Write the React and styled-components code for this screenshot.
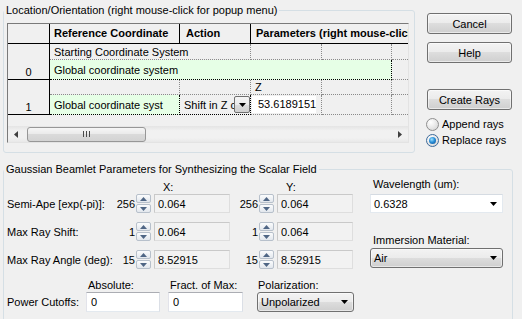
import React from 'react';
import styled, { createGlobalStyle, css } from 'styled-components';

const GlobalStyle = createGlobalStyle`
  * { box-sizing: border-box; }
  html, body { margin: 0; background: #f0f0f0; }
  body {
    font-family: "Liberation Sans", Arial, sans-serif;
    font-size: 11px;
    color: #000;
  }
`;

const Dialog = styled.div`
  width: 522px;
  height: 319px;
  overflow: hidden;
  padding: 4px 0 0 3px;
`;

const TopRow = styled.div`
  display: flex;
  align-items: flex-start;
`;

const GroupBox = styled.fieldset`
  margin: ${p => p.$mt || 0}px 0 0 0;
  width: ${p => p.$width}px;
  height: ${p => (p.$height ? `${p.$height}px` : 'auto')};
  min-width: 0;
  padding: ${p => p.$pad};
  border: 1px solid #d5dfe5;
  border-radius: 3px;
`;

const Legend = styled.legend`
  margin-left: -3px;
  padding: 0 2px;
  line-height: 13px;
`;

/* ---------- location grid ---------- */

const Table = styled.div`
  display: grid;
  grid-template-columns: 42px 130px 71px 71px 70px 1fr;
  grid-template-rows: 20px 16px 20px 15px 20px 1fr 16px;
  height: 120px;
  border: 1px solid;
  border-color: #7a7a7a #e3e3e3 #e3e3e3 #7a7a7a;
  background: #f0f0f0;
  overflow: hidden;
`;

const HeadCell = styled.div`
  grid-column: ${p => p.$col || 'auto'};
  padding: 2px 2px 0 ${p => p.$pl || 4}px;
  line-height: 14px;
  font-weight: bold;
  overflow: hidden;
  white-space: ${p => (p.$nowrap ? 'nowrap' : 'normal')};
  border-right: ${p => (p.$end ? 'none' : '1px solid #000')};
  border-bottom: 1px solid #000;
`;

const RowHead = styled.div`
  grid-column: 1;
  grid-row: ${p => p.$row} / span 2;
  display: flex;
  align-items: flex-end;
  justify-content: center;
  padding-bottom: 1px;
  border-right: 1px solid #000;
  border-bottom: 1px solid #000;
`;

const Cell = styled.div`
  grid-column: span ${p => p.$span || 1};
  display: flex;
  align-items: center;
  padding-left: 4px;
  white-space: nowrap;
  overflow: hidden;
  background: ${p => p.$bg || 'transparent'};
  border-right: 1px dotted ${p => (p.$focus ? '#000' : '#8a8a8a')};
  border-bottom: 1px dotted ${p => (p.$focus ? '#000' : '#8a8a8a')};
  ${p => p.$end && css`border-right: none;`}
`;

const ComboCell = styled(Cell)`
  padding-right: 0;
`;

const ComboText = styled.span`
  flex: 1;
  overflow: hidden;
`;

const CellDrop = styled.span`
  flex: none;
  width: 16px;
  height: 17px;
  display: flex;
  align-items: center;
  justify-content: center;
  border: 1px solid #707070;
  border-radius: 2px;
  background: linear-gradient(#f4f4f4, #ebebeb 50%, #dddddd 50%, #cfcfcf);
`;

const EditCell = styled(Cell)`
  padding: 1px 5px 1px 1px;
  align-items: stretch;
`;

const CellEdit = styled.span`
  flex: 1;
  display: flex;
  align-items: center;
  padding: 0 0 2px 6px;
  background: #fff;
`;

const Filler = styled.div`
  grid-column: 1 / -1;
`;

const HScroll = styled.div`
  grid-column: 1 / -1;
  display: flex;
  align-items: center;
  background: linear-gradient(#e4e4e4, #f1f1f1 30%, #f1f1f1 75%, #e8e8e8);
`;

const ScrollArrow = styled.div`
  flex: none;
  width: 16px;
  height: 100%;
  display: flex;
  align-items: center;
  justify-content: center;
`;

const Thumb = styled.div`
  flex: none;
  width: 119px;
  height: 15px;
  margin-left: 3px;
  display: flex;
  align-items: center;
  justify-content: center;
  gap: 2px;
  border: 1px solid #979797;
  border-radius: 3px;
  background: linear-gradient(#f6f6f6, #e9e9e9 50%, #dadada 50%, #d3d3d3);
`;

const Grip = styled.span`
  width: 1px;
  height: 6px;
  background: #4a4a4a;
`;

const Track = styled.div`
  flex: 1;
`;

/* ---------- side buttons ---------- */

const Side = styled.div`
  display: flex;
  flex-direction: column;
  width: 85px;
  margin-left: 12px;
  padding-top: 9px;
`;

const Button = styled.button`
  width: 85px;
  height: 21px;
  margin: ${p => p.$mt || 0}px 0 0 0;
  padding: 0;
  font: inherit;
  color: #000;
  border: 1px solid #707070;
  border-radius: 3px;
  background: linear-gradient(#f3f3f3, #ebebeb 50%, #dddddd 50%, #cfcfcf);
  box-shadow: inset 0 0 0 1px rgba(255, 255, 255, 0.55);
`;

const RadioRow = styled.label`
  display: flex;
  align-items: center;
  gap: 3px;
  height: 16px;
  margin-left: -1px;
  margin-top: ${p => p.$mt || 0}px;
`;

const RadioMark = styled.span`
  flex: none;
  width: 13px;
  height: 13px;
  display: flex;
  align-items: center;
  justify-content: center;
  border-radius: 50%;
  border: 1px solid ${p => (p.$on ? '#3d6a9a' : '#8f8f8f')};
  background: radial-gradient(circle at 35% 30%, #ffffff, #e6e6e6 55%, #cfcfcf);
  ${p =>
    p.$on &&
    css`
      &::after {
        content: '';
        width: 7px;
        height: 7px;
        border-radius: 50%;
        background: radial-gradient(circle at 40% 35%, #9fe2ff, #2a8fd8 45%, #0d4d8f);
      }
    `}
`;

/* ---------- beamlet parameters ---------- */

const BeamBody = styled.div`
  display: flex;
  gap: 16px;
`;

const ParamArea = styled.div`
  display: flex;
  flex-direction: column;
  width: 347px;
`;

const ParamRow = styled.div`
  display: grid;
  grid-template-columns: 100px 123px 123px;
  align-items: center;
  height: ${p => p.$h || 19}px;
  margin-top: ${p => p.$mt || 0}px;
`;

const RowLabel = styled.span`
  white-space: nowrap;
`;

const ColHead = styled.div`
  padding-left: 56px;
  line-height: 14px;
`;

const SpinGroup = styled.div`
  display: flex;
  align-items: center;
`;

const Num = styled.span`
  flex: 1;
  text-align: right;
  padding-right: 1px;
`;

const Spinner = styled.div`
  flex: none;
  width: 15px;
  height: 19px;
  display: flex;
  flex-direction: column;
  gap: 1px;
  margin-right: 3px;
`;

const SpinHalf = styled.span`
  flex: 1;
  display: flex;
  align-items: center;
  justify-content: center;
  border: 1px solid #b7c0cb;
  border-radius: 2px;
  background: linear-gradient(#fbfcfd, #e2e7ed);
`;

const Field = styled.input`
  width: ${p => p.$w}px;
  height: ${p => p.$h || 19}px;
  margin: 0;
  padding: 0 0 0 ${p => p.$pl || 3}px;
  font: inherit;
  color: #000;
  border: 1px solid;
  border-color: ${p =>
    p.$off ? '#c9c9c9 #dedede #dedede #c9c9c9' : '#abadb3 #dbdfe6 #e3e9ef #e2e3ea'};
  background: ${p => (p.$off ? '#f2f2f2' : '#fff')};
  outline: none;
`;

const CutoffGrid = styled.div`
  display: grid;
  grid-template-columns: 79px 82px 89px 97px;
  grid-template-rows: 13px 20px;
  align-items: center;
  margin-top: 10px;
`;

const SmallLabel = styled.span`
  padding-left: ${p => p.$pl || 0}px;
  line-height: 13px;
  white-space: nowrap;
`;

const SideArea = styled.div`
  display: flex;
  flex-direction: column;
  width: 133px;
`;

const FieldLabel = styled.div`
  line-height: 13px;
  margin: ${p => p.$mt || 0}px 0 ${p => p.$mb || 0}px 3px;
`;

const Combo = styled.div`
  width: ${p => (p.$w ? `${p.$w}px` : '100%')};
  height: ${p => p.$h || 20}px;
  display: flex;
  align-items: center;
  justify-content: space-between;
  padding: 0 5px 0 3px;
  ${p =>
    p.$editable
      ? css`
          background: #fff;
          border: 1px solid #e3e9ef;
          border-top-color: #d5dbe2;
        `
      : css`
          border: 1px solid #707070;
          border-radius: 3px;
          background: linear-gradient(#f3f3f3, #ebebeb 50%, #dddddd 50%, #cfcfcf);
          box-shadow: inset 0 0 0 1px rgba(255, 255, 255, 0.5);
        `}
`;

const DownArrow = ({ color = '#000' }) => (
  <svg width="7" height="4" viewBox="0 0 7 4">
    <polygon points="0,0 7,0 3.5,4" fill={color} />
  </svg>
);

const UpArrow = ({ color }) => (
  <svg width="7" height="4" viewBox="0 0 7 4">
    <polygon points="0,4 7,4 3.5,0" fill={color} />
  </svg>
);

const SideArrow = ({ dir }) => (
  <svg width="4" height="7" viewBox="0 0 4 7">
    <polygon points={dir === 'left' ? '4,0 4,7 0,3.5' : '0,0 0,7 4,3.5'} fill="#404040" />
  </svg>
);

function Spin() {
  return (
    <Spinner>
      <SpinHalf>
        <UpArrow color="#4f6685" />
      </SpinHalf>
      <SpinHalf>
        <DownArrow color="#4f6685" />
      </SpinHalf>
    </Spinner>
  );
}

function SpinField({ count, value }) {
  return (
    <SpinGroup>
      <Num>{count}</Num>
      <Spin />
      <Field $w={76} $off readOnly value={value} />
    </SpinGroup>
  );
}

const params = [
  { label: 'Semi-Ape [exp(-pi)]:', x: [256, '0.064'], y: [256, '0.064'] },
  { label: 'Max Ray Shift:', x: [1, '0.064'], y: [1, '0.064'] },
  { label: 'Max Ray Angle (deg):', x: [15, '8.52915'], y: [15, '8.52915'] },
];

const GREEN = '#e6ffe6';

export default function App() {
  return (
    <>
      <GlobalStyle />
      <Dialog>
        <TopRow>
          <GroupBox $width={412} $pad="6px 5px 9px 3px">
            <Legend>Location/Orientation (right mouse-click for popup menu)</Legend>
            <Table>
              <HeadCell />
              <HeadCell>Reference Coordinate System</HeadCell>
              <HeadCell $pl={6}>Action</HeadCell>
              <HeadCell $col="span 3" $pl={5} $nowrap $end>
                Parameters (right mouse-click for popup menu)
              </HeadCell>

              <RowHead $row={2}>0</RowHead>
              <Cell $span={2}>Starting Coordinate System</Cell>
              <Cell />
              <Cell />
              <Cell $end />
              <Cell $span={4} $bg={GREEN} $focus>Global coordinate system</Cell>
              <Cell $end />

              <RowHead $row={4}>1</RowHead>
              <Cell />
              <Cell />
              <Cell>Z</Cell>
              <Cell />
              <Cell $end />
              <Cell $bg={GREEN} $focus>Global coordinate syst</Cell>
              <ComboCell $focus>
                <ComboText>Shift in Z coordinate</ComboText>
                <CellDrop>
                  <DownArrow />
                </CellDrop>
              </ComboCell>
              <EditCell>
                <CellEdit>53.6189151</CellEdit>
              </EditCell>
              <Cell />
              <Cell $end />

              <Filler />
              <HScroll>
                <ScrollArrow>
                  <SideArrow dir="left" />
                </ScrollArrow>
                <Thumb>
                  <Grip />
                  <Grip />
                  <Grip />
                </Thumb>
                <Track />
                <ScrollArrow>
                  <SideArrow dir="right" />
                </ScrollArrow>
              </HScroll>
            </Table>
          </GroupBox>

          <Side>
            <Button>Cancel</Button>
            <Button $mt={8}>Help</Button>
            <Button $mt={26}>Create Rays</Button>
            <RadioRow $mt={6}>
              <RadioMark />
              Append rays
            </RadioRow>
            <RadioRow>
              <RadioMark $on />
              Replace rays
            </RadioRow>
          </Side>
        </TopRow>

        <GroupBox $width={510} $height={170} $mt={10} $pad="4px 8px 0 3px">
          <Legend>Gaussian Beamlet Parameters for Synthesizing the Scalar Field</Legend>
          <BeamBody>
            <ParamArea>
              <ParamRow $h={14}>
                <span />
                <ColHead>X:</ColHead>
                <ColHead>Y:</ColHead>
              </ParamRow>
              {params.map((p, i) => (
                <ParamRow key={p.label} $mt={i === 0 ? 0 : 9}>
                  <RowLabel>{p.label}</RowLabel>
                  <SpinField count={p.x[0]} value={p.x[1]} />
                  <SpinField count={p.y[0]} value={p.y[1]} />
                </ParamRow>
              ))}
              <CutoffGrid>
                <span />
                <SmallLabel $pl={2}>Absolute:</SmallLabel>
                <SmallLabel $pl={2}>Fract. of Max:</SmallLabel>
                <SmallLabel $pl={1}>Polarization:</SmallLabel>
                <RowLabel>Power Cutoffs:</RowLabel>
                <Field $w={74} $h={20} $pl={4} readOnly value="0" />
                <Field $w={75} $h={20} $pl={4} readOnly value="0" />
                <Combo $w={97}>
                  <span>Unpolarized</span>
                  <DownArrow />
                </Combo>
              </CutoffGrid>
            </ParamArea>

            <SideArea>
              <FieldLabel $mt={-2} $mb={3}>Wavelength (um):</FieldLabel>
              <Combo $editable $h={19}>
                <span>0.6328</span>
                <DownArrow />
              </Combo>
              <FieldLabel $mt={21} $mb={1}>Immersion Material:</FieldLabel>
              <Combo>
                <span>Air</span>
                <DownArrow />
              </Combo>
            </SideArea>
          </BeamBody>
        </GroupBox>
      </Dialog>
    </>
  );
}
